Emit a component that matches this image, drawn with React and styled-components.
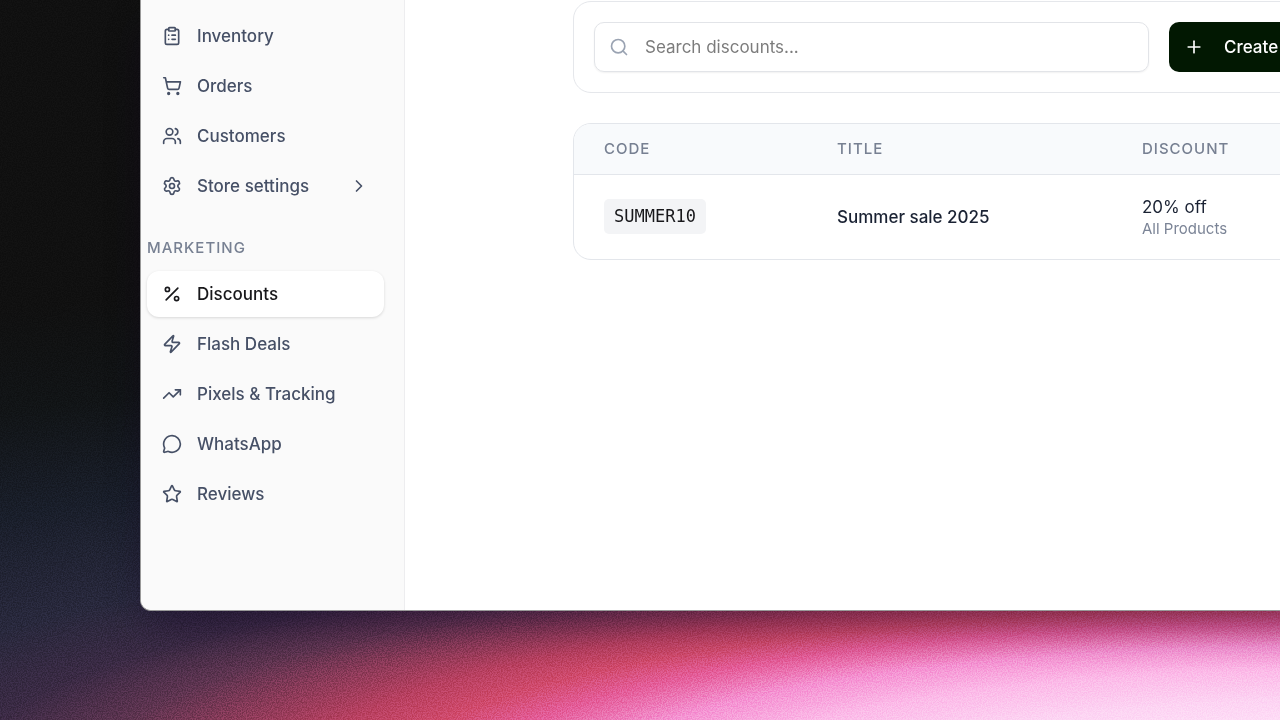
import styled, { createGlobalStyle } from "styled-components"
import {
  ChevronRight,
  ClipboardList,
  MessageCircle,
  Percent,
  Plus,
  Search,
  Settings,
  ShoppingCart,
  Star,
  TrendingUp,
  Users,
  Zap,
} from "lucide-react"

const storeLinks = [
  { label: "Inventory", icon: ClipboardList },
  { label: "Orders", icon: ShoppingCart },
  { label: "Customers", icon: Users },
  { label: "Store settings", icon: Settings, nested: true },
]

const marketingLinks = [
  { label: "Discounts", icon: Percent, active: true },
  { label: "Flash Deals", icon: Zap },
  { label: "Pixels & Tracking", icon: TrendingUp },
  { label: "WhatsApp", icon: MessageCircle },
  { label: "Reviews", icon: Star },
]

const discounts = [
  { code: "SUMMER10", title: "Summer sale 2025", amount: "20% off", scope: "All Products" },
]

const GlobalStyle = createGlobalStyle`
  *, *::before, *::after {
    box-sizing: border-box;
  }
  body {
    margin: 0;
    overflow: hidden;
    font-family: Inter, "Liberation Sans", sans-serif;
    font-size: 17px;
    color: #1a2233;
  }
`

const Desktop = styled.div`
  position: relative;
  display: flex;
  min-height: 100vh;
  padding: 0 0 109px 140px;
  overflow: hidden;
  background: radial-gradient(
    ellipse 1100px 200px at calc(100% + 50px) calc(100% + 60px),
    #ffe0f8 25%,
    #fdd4f3 40%,
    #fcbae8 55%,
    #f592d2 67%,
    #e45c98 78%,
    #d04a6c 86%,
    #b84060 94%,
    #8a3a58 104%,
    #5e3450 113%,
    #3a2a44 125%,
    #28283c 142%,
    #191e2a 178%,
    #111416 220%,
    #101010 265%
  );
`

// film grain over the wallpaper
const Grain = styled.svg`
  position: absolute;
  inset: 0;
  width: 100%;
  height: 100%;
  opacity: 0.16;
  mix-blend-mode: overlay;
`

const Window = styled.div`
  position: relative;
  flex: 1;
  display: flex;
  min-width: 0;
  margin-right: -60px;
  background: #fff;
  border: 1px solid #999;
  border-top: 0;
  border-radius: 0 0 0 11px;
  box-shadow: 0 20px 40px -8px rgba(18, 0, 36, 0.45);
`

const Sidebar = styled.nav`
  flex: none;
  width: 264px;
  padding: 13px 20px 0 6px;
  background: #fafafa;
  border-right: 1px solid #ededef;
  border-radius: 0 0 0 10px;
`

const NavList = styled.ul`
  display: grid;
  gap: 4px;
  margin: 0;
  padding: 0;
  list-style: none;
`

const NavLink = styled.a`
  display: flex;
  align-items: center;
  gap: 15px;
  height: 46px;
  padding: 0 15px;
  border-radius: 12px;
  font-weight: 500;
  text-decoration: none;
  color: ${({ $active }) => ($active ? "#18181b" : "#465066")};
  background: ${({ $active }) => ($active ? "#fff" : "transparent")};
  box-shadow: ${({ $active }) => ($active ? "0 1px 3px rgba(0, 0, 0, 0.14)" : "none")};

  svg:last-child:not(:first-child) {
    margin-left: auto;
  }
`

const NavHeading = styled.h2`
  margin: 29px 0 13px;
  font-size: 15px;
  line-height: 20px;
  font-weight: 500;
  letter-spacing: 1px;
  color: #778092;
`

const Main = styled.main`
  flex: 1;
  min-width: 0;
  padding: 0 0 0 168px;
`

const Toolbar = styled.form`
  display: flex;
  gap: 20px;
  width: 1000px;
  margin: 1px 0 30px;
  padding: 20px;
  border: 1px solid #e5e7eb;
  border-radius: 18px;
`

const SearchField = styled.label`
  flex: none;
  display: flex;
  align-items: center;
  gap: 16px;
  width: 555px;
  height: 50px;
  padding: 0 14px;
  border: 1px solid #e2e4e8;
  border-radius: 10px;
  color: #9aa3b2;
  box-shadow: 0 1px 2px rgba(0, 0, 0, 0.06);
`

const SearchInput = styled.input`
  flex: 1;
  min-width: 0;
  padding: 0;
  border: 0;
  outline: 0;
  background: transparent;
  font: inherit;
  color: #1a2233;

  &::placeholder {
    color: #7c7c7c;
    opacity: 1;
  }
`

const CreateButton = styled.button`
  flex: none;
  display: flex;
  align-items: center;
  gap: 20px;
  height: 50px;
  padding: 0 20px 0 15px;
  border: 0;
  border-radius: 10px;
  background: #021802;
  font: inherit;
  font-weight: 500;
  color: #fff;
`

const TableCard = styled.div`
  width: 1000px;
  overflow: hidden;
  border: 1px solid #e3e6eb;
  border-radius: 18px;
`

const Table = styled.table`
  width: 100%;
  border-collapse: collapse;
  table-layout: fixed;
  text-align: left;
`

const HeadCell = styled.th`
  width: ${({ $width }) => $width};
  height: 50px;
  padding: 0 0 0 30px;
  border-bottom: 1px solid #e3e6eb;
  background: #f8fafc;
  font-size: 15px;
  font-weight: 500;
  letter-spacing: 1px;
  color: #778092;
`

const Cell = styled.td`
  height: 85px;
  padding: 0 0 0 30px;
  font-weight: ${({ $strong }) => ($strong ? 500 : 400)};
`

const Code = styled.code`
  display: inline-block;
  padding: 0 10px;
  border-radius: 5px;
  background: #f3f4f6;
  font-family: "DejaVu Sans Mono", monospace;
  font-size: 17px;
  line-height: 35px;
  color: #18181b;
`

const Amount = styled.div`
  line-height: 24px;
`

const Scope = styled.div`
  font-size: 15px;
  line-height: 20px;
  color: #7b8496;
`

const NavItems = ({ links }) => (
  <NavList>
    {links.map(({ label, icon: Icon, active, nested }) => (
      <li key={label}>
        <NavLink href="#" $active={active} aria-current={active ? "page" : undefined}>
          <Icon size={20} />
          {label}
          {nested && <ChevronRight size={20} />}
        </NavLink>
      </li>
    ))}
  </NavList>
)

const App = () => {
  return (
    <>
      <GlobalStyle />
      <Desktop>
        <Grain aria-hidden="true">
          <filter id="grain" colorInterpolationFilters="sRGB">
            <feTurbulence type="fractalNoise" baseFrequency="0.8" numOctaves="2" />
            <feColorMatrix type="matrix" values="3 0 0 0 -1  3 0 0 0 -1  3 0 0 0 -1  0 0 0 0 1" />
          </filter>
          <rect width="100%" height="100%" filter="url(#grain)" />
        </Grain>
        <Window>
          <Sidebar>
            <NavItems links={storeLinks} />
            <NavHeading>MARKETING</NavHeading>
            <NavItems links={marketingLinks} />
          </Sidebar>
          <Main>
            <Toolbar>
              <SearchField>
                <Search size={20} />
                <SearchInput type="search" placeholder="Search discounts..." aria-label="Search discounts" />
              </SearchField>
              <CreateButton type="button">
                <Plus size={20} />
                Create
              </CreateButton>
            </Toolbar>
            <TableCard>
              <Table>
                <thead>
                  <tr>
                    <HeadCell $width="233px">CODE</HeadCell>
                    <HeadCell $width="305px">TITLE</HeadCell>
                    <HeadCell>DISCOUNT</HeadCell>
                  </tr>
                </thead>
                <tbody>
                  {discounts.map(({ code, title, amount, scope }) => (
                    <tr key={code}>
                      <Cell><Code>{code}</Code></Cell>
                      <Cell $strong>{title}</Cell>
                      <Cell>
                        <Amount>{amount}</Amount>
                        <Scope>{scope}</Scope>
                      </Cell>
                    </tr>
                  ))}
                </tbody>
              </Table>
            </TableCard>
          </Main>
        </Window>
      </Desktop>
    </>
  )
}

export default App
